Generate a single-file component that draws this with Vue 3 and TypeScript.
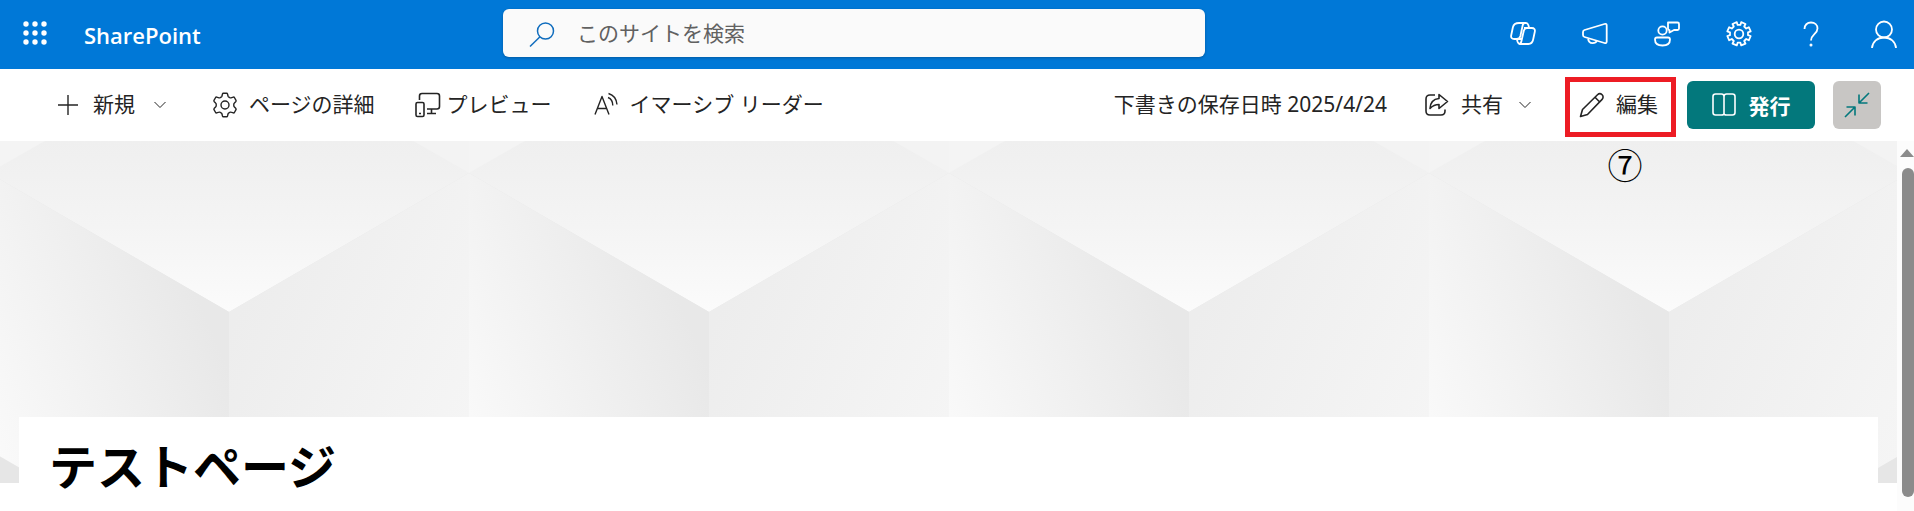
<script setup lang="ts">
import { ref } from 'vue'

const query = ref('')
const dots = [4, 13, 22]
</script>

<template>
  <div class="page">
    <header class="suite">
      <button class="plain waffle" aria-label="アプリ起動ツール">
        <svg width="26" height="26" viewBox="0 0 26 26" fill="currentColor">
          <template v-for="y in dots" :key="y">
            <circle v-for="x in dots" :key="x" :cx="x" :cy="y" r="2.7" />
          </template>
        </svg>
      </button>
      <a class="brand" href="#">SharePoint</a>
      <label class="search">
        <svg width="26" height="26" viewBox="0 0 26 26" fill="none" stroke="currentColor" stroke-width="1.5">
          <circle cx="16.5" cy="9" r="8" />
          <path d="M11 14.800 1 24.500" />
        </svg>
        <input v-model="query" type="text" placeholder="このサイトを検索" aria-label="このサイトを検索" />
      </label>
      <nav class="tools">
        <button class="plain" aria-label="Copilot">
          <svg class="line" width="26" height="26" viewBox="0 0 26 26">
            <path d="M9 2h7c1.300 0 1.900.8 2.300 2l.9 3h2.600c2.400 0 3.500 1.600 3 3.800l-1.700 8c-.7 3-2.100 4.200-4.600 4.200H10c-1.300 0-1.900-.8-2.300-2L6.800 18H4.200c-2.400 0-3.500-1.600-3-3.800l1.700-8C3.600 3.200 6 2 9 2ZM14.800 2c-1.300 0-1.800 1-2.100 2.300L10.400 15c-.5 2-1.600 3-3.600 3M19.200 7h-2.400c-1.700 0-2.600 1-3 2.800l-2.400 10.500c-.4 1.700-1 2.700-2.200 2.700M14 7h4M8 18h4" />
          </svg>
        </button>
        <button class="plain" aria-label="お知らせ">
          <svg class="line" width="26" height="26" viewBox="0 0 26 26">
            <path d="M2.500 9 22.500 3c1.300-.4 2.200.2 2.200 1.500v16c0 1.300-1 1.900-2.200 1.500L2.500 16C1.500 15.700 1 15 1 14v-3c0-1 .5-1.700 1.500-2ZM6 17.200c.3 3.200 2 5 4.600 5 2.200 0 3.800-1.100 4.400-2.700" />
          </svg>
        </button>
        <button class="plain" aria-label="フィードバック">
          <svg class="line" width="26" height="26" viewBox="0 0 26 26">
            <circle cx="8.500" cy="9.500" r="4.200" />
            <path d="M3 16.500h11c1.300 0 2 .7 2 2 0 3.800-3 6-7.500 6S1 22.300 1 18.500c0-1.300.7-2 2-2ZM14 1.500h9.500c1 0 1.500.5 1.500 1.500v4.500c0 1-.5 1.500-1.500 1.500H20l-4.500 2.500V9.200C14.500 9 14 8.500 14 7.500Z" />
          </svg>
        </button>
        <button class="plain" aria-label="設定">
          <svg class="line" width="26" height="26" viewBox="0 0 26 26">
            <circle cx="13" cy="13" r="4.300" />
            <path d="m10.800 1.200.8 2.700h2.800l.8-2.700 4.300 1.800-1.300 2.500 2 2 2.600-1.300 1.900 4.200-2.700.9v2.900l2.700.8-1.900 4.300-2.600-1.300-2 2 1.300 2.600-4.300 1.800-.8-2.700h-2.800l-.8 2.700L6.500 22.600 7.800 20l-2-2-2.600 1.300-1.900-4.300 2.700-.8v-2.900l-2.700-.9 1.900-4.200 2.600 1.300 2-2L6.500 3Z" />
          </svg>
        </button>
        <button class="plain" aria-label="ヘルプ">
          <svg class="line" width="26" height="26" viewBox="0 0 26 26">
            <path d="M6.500 8c0-4 2.700-6.500 6.500-6.500s6.500 2.500 6.500 6c0 5.500-6.500 6-6.500 12" />
            <circle cx="13" cy="24" r=".6" fill="currentColor" />
          </svg>
        </button>
        <button class="plain account" aria-label="アカウント">
          <svg class="line" width="28" height="28" viewBox="0 0 28 28">
            <circle cx="14" cy="9.500" r="8" />
            <path d="M2 28c.5-6.500 5.500-10.500 12-10.500S25.500 21.500 26 28" />
          </svg>
        </button>
      </nav>
    </header>

    <div class="commands">
      <button class="cmd add">
        <svg class="line thin" width="20" height="26" viewBox="0 0 20 26"><path d="M10 3v20M0 13h20" /></svg>
        <span class="label">新規</span>
        <svg class="line hair chev" width="12" height="8" viewBox="0 0 12 8"><path d="m.5 1 5.500 5.500L11.500 1" /></svg>
      </button>
      <button class="cmd details">
        <svg class="line thin" width="26" height="26" viewBox="0 0 26 26">
          <circle cx="13" cy="13" r="4" />
          <path d="M11.300 1.300h3.400q.6 0 .8.700l.6 2.300q.2.600.8.900l.9.500q.6.300 1.200.100l2.300-.7q.7-.2 1.100.4l1.600 2.800q.3.600-.1 1.100l-1.700 1.800q-.4.400-.4 1v1.600q0 .6.400 1l1.700 1.800q.4.500.1 1.100l-1.600 2.800q-.4.600-1.100.4l-2.300-.7q-.6-.2-1.200.1l-.9.500q-.6.300-.8.900l-.6 2.300q-.2.700-.8.700h-3.400q-.6 0-.8-.7l-.6-2.300q-.2-.6-.8-.9l-.9-.5q-.6-.3-1.200-.1l-2.300.7q-.7.200-1.100-.4l-1.600-2.800q-.3-.6.1-1.100l1.700-1.800q.4-.4.4-1v-1.600q0-.6-.4-1L2.100 9.400q-.4-.5-.1-1.100l1.600-2.800q.4-.6 1.100-.4l2.300.7q.6.200 1.200-.1l.9-.5q.6-.3.800-.9l.6-2.300q.2-.7.800-.7Z" />
        </svg>
        <span class="label">ページの詳細</span>
      </button>
      <button class="cmd preview">
        <svg class="line" width="26" height="26" viewBox="0 0 26 26">
          <path d="M4.500 8V4c0-1.500 1-2.500 2.500-2.500h15c1.500 0 2.500 1 2.500 2.500v10.500c0 1.500-1 2.500-2.500 2.500H12M16.500 17v4.500M12 21.500h9" />
          <rect x="1" y="10.500" width="8" height="14" rx="1.500" /><path d="M4 21.500h2" />
        </svg>
        <span class="label">プレビュー</span>
      </button>
      <button class="cmd reader">
        <svg class="line thin" width="24" height="26" viewBox="0 0 24 26">
          <path d="M1 22.500 8 4.500l7 18M3.500 16.500h9M14 5.500c3 1.200 4.800 4 4.800 8M14.500 1.500c5 1.500 8 5.500 8.500 11" />
        </svg>
        <span class="label">イマーシブ リーダー</span>
      </button>

      <span class="label saved">下書きの保存日時 2025/4/24</span>
      <button class="cmd share">
        <svg class="line" width="24" height="26" viewBox="0 0 24 26">
          <path d="M10 3H5C2.500 3 1 4.500 1 7v12c0 2.500 1.500 4 4 4h11c2.500 0 4-1.500 4-4v-1.500M14 2.500 22.500 9.500 14 16.500v-4c-4 0-6.500 1.300-9 4C5.300 10.500 9 7 14 6.500Z" />
        </svg>
        <span class="label">共有</span>
        <svg class="line hair chev" width="12" height="8" viewBox="0 0 12 8"><path d="m.5 1 5.500 5.500L11.500 1" /></svg>
      </button>
      <div class="marked">
        <button class="cmd edit">
          <svg class="line" width="26" height="26" viewBox="0 0 26 26">
            <path d="m1.500 24.500 2-7L18.500 2.800c1.300-1.300 3.300-1.300 4.600 0s1.300 3.300 0 4.600L8.500 22.500ZM16 5.300l4.700 4.700" />
          </svg>
          <span class="label">編集</span>
        </button>
        <span class="step">⑦</span>
      </div>
      <button class="publish">
        <svg class="line" width="24" height="24" viewBox="0 0 24 24">
          <path d="M12 3.500c0-1.500-1-2.500-2.500-2.500h-6C2 1 1 2 1 3.500v16C1 21 2 22 3.500 22h6c1.500 0 2.500-.5 2.500-1.500 0 1 1 1.500 2.500 1.500h6c1.500 0 2.500-1 2.500-2.500v-16C23 2 22 1 20.500 1h-6C13 1 12 2 12 3.500ZM12 3.500v17" />
        </svg>
        <span>発行</span>
      </button>
      <button class="collapse" aria-label="縮小">
        <svg class="line" width="26" height="26" viewBox="0 0 26 26">
          <path d="M25 1 15 11M15 2.500V11h8.500M1 25l10-10M2.500 15H11v8.500" />
        </svg>
      </button>
    </div>

    <div class="body">
      <main class="content">
        <section class="hero">
          <svg class="cubes" width="100%" height="100%" aria-hidden="true">
            <defs>
              <linearGradient id="top" x1="0" y1="0" x2="0" y2="1">
                <stop offset="0" stop-color="#efefef" />
                <stop offset=".5" stop-color="#f4f4f4" />
                <stop offset="1" stop-color="#fbfbfb" />
              </linearGradient>
              <linearGradient id="left" gradientUnits="userSpaceOnUse" x1="0" y1="309" x2="232" y2="210">
                <stop offset="0" stop-color="#fafafa" />
                <stop offset="1" stop-color="#e8e8e8" />
              </linearGradient>
              <linearGradient id="right" gradientUnits="userSpaceOnUse" x1="240" y1="190" x2="480" y2="290">
                <stop offset="0" stop-color="#ededed" />
                <stop offset="1" stop-color="#f5f5f5" />
              </linearGradient>
              <pattern id="cube" x="-11" y="0" width="480" height="342" patternUnits="userSpaceOnUse">
                <rect width="480" height="342" fill="#e6e6e6" />
                <path d="M0 0h480v32L240 171 0 32Z" fill="url(#top)" />
                <path d="M0 32 240 171v277L0 309Z" fill="url(#left)" />
                <path d="M480 32 240 171v277L480 309Z" fill="url(#right)" />
                <path d="M0 0h56L0 32Z" fill="#f4f4f4" />
                <path d="M480 0h-56l56 32Z" fill="#f3f3f3" />
              </pattern>
            </defs>
            <rect width="100%" height="100%" fill="url(#cube)" />
          </svg>
          <div class="card"><h1>テストページ</h1></div>
        </section>
      </main>
      <div class="scrollbar" aria-hidden="true">
        <svg width="14" height="8" viewBox="0 0 14 8"><path d="M0 8 7 0l7 8Z" fill="#8b8b8b" /></svg>
        <div class="thumb"></div>
      </div>
    </div>
  </div>
</template>

<style>
body {
  margin: 0;
}
</style>

<style scoped>
.page {
  display: flex;
  flex-direction: column;
  height: 100vh;
  overflow: hidden;
  background: #fff;
  color: #242424;
  font-family: "Noto Sans", "Noto Sans CJK JP", sans-serif;
  font-size: 21px;
}
button {
  margin: 0;
  padding: 0;
  border: 0;
  background: none;
  color: inherit;
  font: inherit;
  white-space: nowrap;
}
svg {
  display: block;
  flex: none;
}
.line {
  fill: none;
  stroke: currentColor;
  stroke-width: 1.6;
  stroke-linejoin: round;
}
.thin {
  stroke-width: 1.4;
}
.hair {
  stroke-width: 1;
}
.label {
  padding-bottom: 4px;
}
.suite {
  display: grid;
  grid-template-columns: 84px minmax(120px, 419px) minmax(200px, 702px) 1fr;
  flex: none;
  align-items: center;
  height: 69px;
  background: #0078d7;
  color: #fff;
}
.waffle {
  padding: 0 0 4px 22px;
}
.brand {
  color: #fff;
  font-family: "Open Sans", sans-serif;
  font-size: 22px;
  font-weight: 600;
  text-decoration: none;
}
.search {
  display: flex;
  align-items: center;
  gap: 22px;
  box-sizing: border-box;
  height: 48px;
  margin-bottom: 3px;
  padding: 0 26px;
  border-radius: 6px;
  background: #fafafa;
  box-shadow: 0 1px 3px rgba(0, 0, 0, 0.25);
  color: #0f6cbd;
}
.search svg {
  margin-top: 4px;
}
.search input {
  flex: 1;
  min-width: 0;
  padding: 0;
  border: 0;
  outline: 0;
  background: none;
  color: #242424;
  font: inherit;
}
.search input::placeholder {
  color: #616161;
  opacity: 1;
}
.tools {
  display: flex;
  justify-content: flex-end;
  gap: 46px;
  padding: 0 16px 2px 0;
}
.tools .line {
  stroke-width: 1.8;
}
.commands {
  display: flex;
  flex: none;
  align-items: center;
  height: 72px;
  padding: 0 33px 0 58px;
}
.cmd {
  display: flex;
  align-items: center;
  gap: 12px;
  height: 48px;
}
.add {
  gap: 15px;
}
.chev {
  margin-left: 4px;
}
.details {
  gap: 11px;
  margin-left: 46px;
}
.preview {
  gap: 6px;
  margin-left: 40px;
}
.reader {
  margin-left: 42px;
}
.saved {
  margin-left: auto;
  white-space: nowrap;
}
.share {
  margin-left: 38px;
}
.marked {
  position: relative;
  margin: 4px 0 0 34px;
}
.edit {
  box-sizing: border-box;
  gap: 11px;
  height: 60px;
  padding: 0 13px 4px 9px;
  border: 5px solid #ed1c24;
}
.step {
  position: absolute;
  top: 63px;
  left: 0;
  width: 120px;
  color: #000;
  font-family: "Noto Sans CJK JP", sans-serif;
  font-size: 35px;
  line-height: 48px;
  text-align: center;
}
.publish {
  display: flex;
  align-items: center;
  justify-content: center;
  gap: 13px;
  width: 128px;
  height: 48px;
  margin-left: 11px;
  border-radius: 6px;
  background: #03787c;
  color: #fff;
  font-weight: 700;
}
.collapse {
  display: grid;
  place-items: center;
  width: 48px;
  height: 48px;
  margin-left: 18px;
  border-radius: 6px;
  background: #c8c6c4;
  color: #03787c;
}
.body {
  display: flex;
  flex: 1;
  min-height: 0;
}
.content {
  flex: 1;
  min-width: 0;
}
.hero {
  display: grid;
  grid-template-rows: 342px;
}
.cubes,
.card {
  grid-area: 1 / 1;
}
.card {
  z-index: 1;
  align-self: start;
  margin: 276px 19px 0;
  padding: 10px 30px;
  background: #fff;
}
h1 {
  margin: 0;
  color: #000;
  font-size: 48px;
  font-weight: 700;
  line-height: 80px;
}
.scrollbar {
  display: flex;
  flex-direction: column;
  align-items: flex-end;
  gap: 11px;
  box-sizing: border-box;
  width: 17px;
  padding: 8px 0 14px;
  background: #fcfcfc;
}
.thumb {
  flex: 1;
  width: 12px;
  border-radius: 6px;
  background: #8b8b8b;
}
</style>
